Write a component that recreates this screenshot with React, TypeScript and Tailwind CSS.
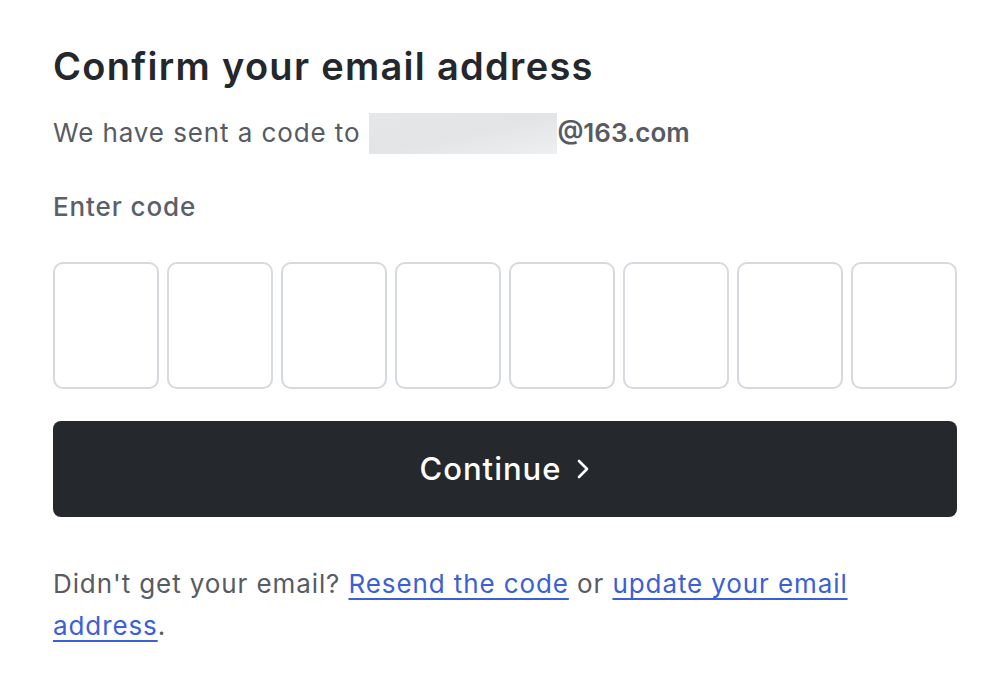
export default function App() {
  const boxes = [0, 1, 2, 3, 4, 5, 6, 7]

  return (
    <div className="min-h-screen w-full bg-white font-['Inter','Liberation_Sans',sans-serif]">
      <div className="ml-[53px] w-[904px] pt-[40px]">
        {/* Heading */}
        <h1 className="text-[38px] leading-[52px] font-semibold text-[#24272c] tracking-[1.3px]">
          Confirm your email address
        </h1>

        <p className="mt-[20px] flex items-center text-[26px] leading-[42px] tracking-[0.9px] text-[#565b64]">
          <span>We have sent a code to</span>
          <span className="ml-[9px] inline-block w-[188px] h-[41px] bg-gradient-to-br from-[#e6e7e9] via-[#e3e4e6] to-[#eeeff0]"></span>
          <span className="font-semibold tracking-normal text-[#565b64]">@163.com</span>
        </p>

        <p className="mt-[32px] text-[26px] leading-[42px] font-medium tracking-[0.9px] text-[#5a606b]">
          Enter code
        </p>

        {/* Code inputs */}
        <div className="mt-[34px] grid grid-cols-8 gap-[8px]">
          {boxes.map((i) => (
            <input
              key={i}
              type="text"
              maxLength={1}
              className="h-[127px] w-full rounded-[10px] border-2 border-[#d6d9de] bg-white text-center text-[40px] outline-none"
            />
          ))}
        </div>

        {/* Continue button */}
        <button className="mt-[32px] flex h-[96px] w-full items-center justify-center gap-[15px] rounded-[8px] bg-[#25282d] text-white">
          <span className="text-[31px] font-medium tracking-[1px]">Continue</span>
          <svg width="14" height="20" viewBox="0 0 14 20" fill="none">
            <polyline
              points="3,2 11,10 3,18"
              stroke="currentColor"
              strokeWidth="2.6"
              strokeLinecap="round"
              strokeLinejoin="round"
            />
          </svg>
        </button>

        {/* Footer */}
        <p className="mt-[46px] text-[26px] leading-[42px] tracking-[0.9px] text-[#565b64]">
          Didn't get your email?{' '}
          <a href="#" className="text-[#3c5fd6] underline underline-offset-[5px] decoration-2">
            Resend the code
          </a>{' '}
          or{' '}
          <a href="#" className="text-[#3c5fd6] underline underline-offset-[5px] decoration-2">
            update your email address
          </a>
          .
        </p>
      </div>
    </div>
  )
}
